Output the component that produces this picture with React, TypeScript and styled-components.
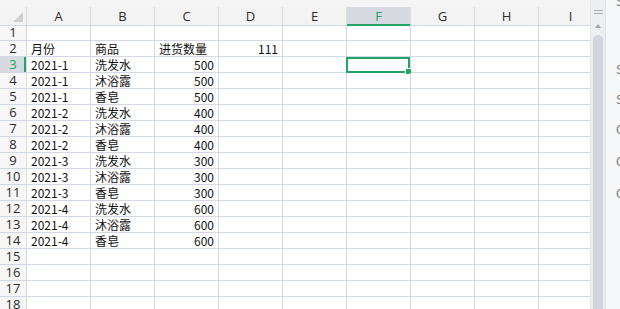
import React from "react";
import styled, { createGlobalStyle, css } from "styled-components";

const GREEN = "#21a566";
const GRID = "#d2d8e5";

const Global = createGlobalStyle`
  html, body { margin: 0; padding: 0; background: #fff; overflow: hidden; }
  * { box-sizing: border-box; }
`;

const Frame = styled.div`
  display: flex;
  width: 620px;
  height: 309px;
  overflow: hidden;
  background: #fff;
`;

const Sheet = styled.div`
  width: 590px;
  height: 309px;
  overflow: hidden;
  display: flex;
  flex-direction: column;
  flex: none;
`;

const TopStrip = styled.div`
  height: 7px;
  flex: none;
  background: #f5f5f5;
`;

const Row = styled.div<{ $h: number }>`
  display: grid;
  grid-template-columns: 27px repeat(9, 64px);
  height: ${(p) => p.$h}px;
  flex: none;
`;

const Corner = styled.div`
  position: relative;
  background: #f3f3f3;
  border-right: 1px solid #dcdcdc;
  border-bottom: 1px solid ${GRID};
  &::after {
    content: "";
    position: absolute;
    right: 3px;
    bottom: 3px;
    width: 0;
    height: 0;
    border-left: 10px solid transparent;
    border-bottom: 10px solid #cfcfcf;
  }
`;

const ColHead = styled.div<{ $active?: boolean }>`
  display: flex;
  align-items: center;
  justify-content: center;
  font-family: "Open Sans", "Liberation Sans", sans-serif;
  font-size: 13px;
  line-height: 15px;
  color: #2b2b2b;
  background: #f3f3f3;
  border-right: 1px solid #dcdcdc;
  border-bottom: 1px solid ${GRID};
  padding-top: 1px;
  ${(p) =>
    p.$active &&
    css`
      background: #d6d9df;
      color: ${GREEN};
      border-bottom: 2px solid ${GREEN};
      padding-top: 2px;
    `}
`;

const RowHead = styled.div<{ $active?: boolean }>`
  display: flex;
  align-items: center;
  justify-content: center;
  font-family: "Open Sans", "Liberation Sans", sans-serif;
  font-size: 13px;
  line-height: 15px;
  color: #2b2b2b;
  background: #f7f7f7;
  border-right: 1px solid #d9d9d9;
  border-bottom: 1px solid ${GRID};
  ${(p) =>
    p.$active &&
    css`
      background: #d6d9df;
      color: ${GREEN};
      box-shadow: inset -2px 0 0 ${GREEN};
    `}
`;

const Cell = styled.div<{ $align?: "left" | "right" }>`
  position: relative;
  display: flex;
  align-items: flex-end;
  justify-content: ${(p) => (p.$align === "right" ? "flex-end" : "flex-start")};
  padding: 0 4px 0 4px;
  font-family: "Noto Sans CJK SC", "Liberation Sans", sans-serif;
  font-size: 12px;
  line-height: 15px;
  color: #111;
  white-space: nowrap;
  border-right: 1px solid ${GRID};
  border-bottom: 1px solid ${GRID};
`;

const Selection = styled.div`
  position: absolute;
  left: -1px;
  top: 0;
  right: 0;
  bottom: -1px;
  border: 2px solid ${GREEN};
  pointer-events: none;
`;

const Handle = styled.div`
  position: absolute;
  right: -4px;
  bottom: -4px;
  width: 7px;
  height: 7px;
  background: ${GREEN};
  border: 1px solid #fff;
`;

const ScrollBar = styled.div`
  width: 16px;
  flex: none;
  display: flex;
  flex-direction: column;
  align-items: center;
  background: #eceef2;
  border-left: 1px solid #e4e6eb;
  border-right: 1px solid #e2e3e8;
  padding-top: 10px;
`;

const Grip = styled.div`
  width: 9px;
  height: 4px;
  border-top: 1px solid #a9adb6;
  border-bottom: 1px solid #a9adb6;
  flex: none;
`;

const UpArrow = styled.div`
  margin-top: 10px;
  width: 0;
  height: 0;
  border-left: 3px solid transparent;
  border-right: 3px solid transparent;
  border-bottom: 4px solid #9ea3ad;
  flex: none;
`;

const Thumb = styled.div`
  margin-top: 7px;
  width: 10px;
  flex: 1;
  background: #d2d5dd;
  border-radius: 5px 5px 0 0;
`;

const SidePanel = styled.div`
  flex: 1;
  background: #f6f7f9;
  overflow: hidden;
  display: flex;
  flex-direction: column;
  padding-left: 10px;
  font-family: "Noto Sans CJK SC", "Liberation Sans", sans-serif;
  font-size: 12px;
  line-height: 14px;
  color: #777;
`;

const SideLabel = styled.span<{ $gap: number }>`
  margin-top: ${(p) => p.$gap}px;
  white-space: nowrap;
`;

const cols = ["A", "B", "C", "D", "E", "F", "G", "H", "I"];

type R = [string, string, string, string];
const data: Record<number, R> = {
  2: ["月份", "商品", "进货数量", "111"],
  3: ["2021-1", "洗发水", "500", ""],
  4: ["2021-1", "沐浴露", "500", ""],
  5: ["2021-1", "香皂", "500", ""],
  6: ["2021-2", "洗发水", "400", ""],
  7: ["2021-2", "沐浴露", "400", ""],
  8: ["2021-2", "香皂", "400", ""],
  9: ["2021-3", "洗发水", "300", ""],
  10: ["2021-3", "沐浴露", "300", ""],
  11: ["2021-3", "香皂", "300", ""],
  12: ["2021-4", "洗发水", "600", ""],
  13: ["2021-4", "沐浴露", "600", ""],
  14: ["2021-4", "香皂", "600", ""],
};

const isNum = (s: string) => /^\d+$/.test(s);

export default function App() {
  const rows = Array.from({ length: 18 }, (_, i) => i + 1);
  return (
    <>
      <Global />
      <Frame>
        <Sheet>
          <TopStrip />
          <Row $h={18}>
            <Corner />
            {cols.map((c) => (
              <ColHead key={c} $active={c === "F"}>
                {c}
              </ColHead>
            ))}
          </Row>
          {rows.map((r) => {
            const d = data[r];
            return (
              <Row key={r} $h={16}>
                <RowHead $active={r === 3}>{r}</RowHead>
                {cols.map((c, ci) => {
                  const v = d && ci < 4 ? d[ci] : "";
                  const sel = r === 3 && c === "F";
                  return (
                    <Cell key={c} $align={isNum(v) ? "right" : "left"}>
                      {v}
                      {sel && (
                        <Selection>
                          <Handle />
                        </Selection>
                      )}
                    </Cell>
                  );
                })}
              </Row>
            );
          })}
        </Sheet>
        <ScrollBar>
          <Grip />
          <UpArrow />
          <Thumb />
        </ScrollBar>
        <SidePanel>
          <SideLabel $gap={-6}>S</SideLabel>
          <SideLabel $gap={54}>S</SideLabel>
          <SideLabel $gap={16}>S</SideLabel>
          <SideLabel $gap={16}>C</SideLabel>
          <SideLabel $gap={18}>Q</SideLabel>
          <SideLabel $gap={18}>C</SideLabel>
        </SidePanel>
      </Frame>
    </>
  );
}
